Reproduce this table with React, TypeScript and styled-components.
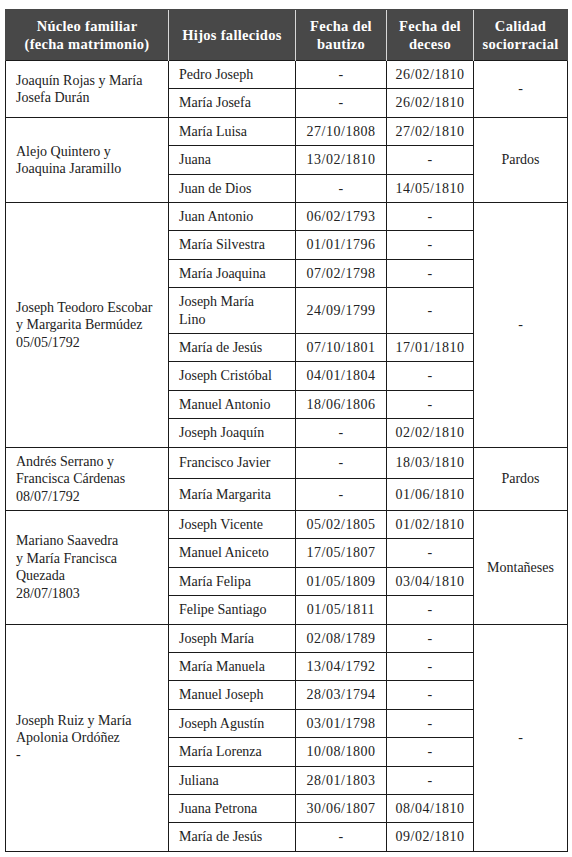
import React from "react";
import styled, { createGlobalStyle } from "styled-components";

const Global = createGlobalStyle`
  html, body { margin: 0; padding: 0; background: #fff; }
  body { font-family: "Liberation Serif", "Times New Roman", serif; color: #1e1e1e; }
`;

const Page = styled.div`
  padding: 9px 5px 0 5px;
`;

const Table = styled.table`
  width: 562px;
  border-collapse: collapse;
  table-layout: fixed;
  font-family: "Liberation Serif", "Times New Roman", serif;
  color: #222;
  font-size: 14px;
  line-height: 17.4px;
`;

const Col = styled.col<{ $w: number }>`
  width: ${(p) => p.$w}px;
`;

const HeadCell = styled.th`
  background: #484848;
  color: #fff;
  font-weight: bold;
  font-size: 14.5px;
  line-height: 18px;
  letter-spacing: 0.3px;
  padding: 7px 2px;
  height: 36px;
  text-align: center;
  vertical-align: middle;
  border-left: 1px solid #d8d8d8;
  border-top: 1px solid #484848;
  &:first-child { border-left: 1px solid #484848; }
  &:last-child { border-right: 1px solid #484848; }
`;

const Cell = styled.td`
  border: 1px solid #1a1a1a;
  padding: 5px 10px;
  vertical-align: middle;
`;

const FamilyCell = styled(Cell)`
  text-align: left;
  padding-left: 10px;
`;

const NameCell = styled(Cell)`
  text-align: left;
`;

const DateCell = styled(Cell)`
  text-align: center;
  padding: 5px 4px;
  letter-spacing: 0.5px;
`;

const QualityCell = styled(Cell)`
  text-align: center;
`;

type Child = [string, string, string];
type Group = { family: string[]; quality: string; children: Child[] };

const groups: Group[] = [
  {
    family: ["Joaquín Rojas y María", "Josefa Durán"],
    quality: "-",
    children: [
      ["Pedro Joseph", "-", "26/02/1810"],
      ["María Josefa", "-", "26/02/1810"],
    ],
  },
  {
    family: ["Alejo Quintero y", "Joaquina Jaramillo"],
    quality: "Pardos",
    children: [
      ["María Luisa", "27/10/1808", "27/02/1810"],
      ["Juana", "13/02/1810", "-"],
      ["Juan de Dios", "-", "14/05/1810"],
    ],
  },
  {
    family: ["Joseph Teodoro Escobar", "y Margarita Bermúdez", "05/05/1792"],
    quality: "-",
    children: [
      ["Juan Antonio", "06/02/1793", "-"],
      ["María Silvestra", "01/01/1796", "-"],
      ["María Joaquina", "07/02/1798", "-"],
      ["Joseph María\nLino", "24/09/1799", "-"],
      ["María de Jesús", "07/10/1801", "17/01/1810"],
      ["Joseph Cristóbal", "04/01/1804", "-"],
      ["Manuel Antonio", "18/06/1806", "-"],
      ["Joseph Joaquín", "-", "02/02/1810"],
    ],
  },
  {
    family: ["Andrés Serrano y", "Francisca Cárdenas", "08/07/1792"],
    quality: "Pardos",
    children: [
      ["Francisco Javier", "-", "18/03/1810"],
      ["María Margarita", "-", "01/06/1810"],
    ],
  },
  {
    family: ["Mariano Saavedra", "y María Francisca", "Quezada", "28/07/1803"],
    quality: "Montañeses",
    children: [
      ["Joseph Vicente", "05/02/1805", "01/02/1810"],
      ["Manuel Aniceto", "17/05/1807", "-"],
      ["María Felipa", "01/05/1809", "03/04/1810"],
      ["Felipe Santiago", "01/05/1811", "-"],
    ],
  },
  {
    family: ["Joseph Ruiz y María", "Apolonia Ordóñez", "-"],
    quality: "-",
    children: [
      ["Joseph María", "02/08/1789", "-"],
      ["María Manuela", "13/04/1792", "-"],
      ["Manuel Joseph", "28/03/1794", "-"],
      ["Joseph Agustín", "03/01/1798", "-"],
      ["María Lorenza", "10/08/1800", "-"],
      ["Juliana", "28/01/1803", "-"],
      ["Juana Petrona", "30/06/1807", "08/04/1810"],
      ["María de Jesús", "-", "09/02/1810"],
    ],
  },
];

const lines = (parts: string[]) =>
  parts.map((p, i) => (
    <React.Fragment key={i}>
      {i > 0 && <br />}
      {p}
    </React.Fragment>
  ));

export default function App() {
  return (
    <>
      <Global />
      <Page>
        <Table>
          <colgroup>
            <Col $w={163} />
            <Col $w={127} />
            <Col $w={91} />
            <Col $w={87} />
            <Col $w={94} />
          </colgroup>
          <thead>
            <tr>
              <HeadCell>Núcleo familiar<br />(fecha matrimonio)</HeadCell>
              <HeadCell>Hijos fallecidos</HeadCell>
              <HeadCell>Fecha del<br />bautizo</HeadCell>
              <HeadCell>Fecha del<br />deceso</HeadCell>
              <HeadCell>Calidad<br />sociorracial</HeadCell>
            </tr>
          </thead>
          <tbody>
            {groups.map((g, gi) =>
              g.children.map((c, ci) => (
                <tr key={`${gi}-${ci}`}>
                  {ci === 0 && (
                    <FamilyCell rowSpan={g.children.length}>{lines(g.family)}</FamilyCell>
                  )}
                  <NameCell>{lines(c[0].split("\n"))}</NameCell>
                  <DateCell>{c[1]}</DateCell>
                  <DateCell>{c[2]}</DateCell>
                  {ci === 0 && (
                    <QualityCell rowSpan={g.children.length}>{g.quality}</QualityCell>
                  )}
                </tr>
              ))
            )}
          </tbody>
        </Table>
      </Page>
    </>
  );
}
